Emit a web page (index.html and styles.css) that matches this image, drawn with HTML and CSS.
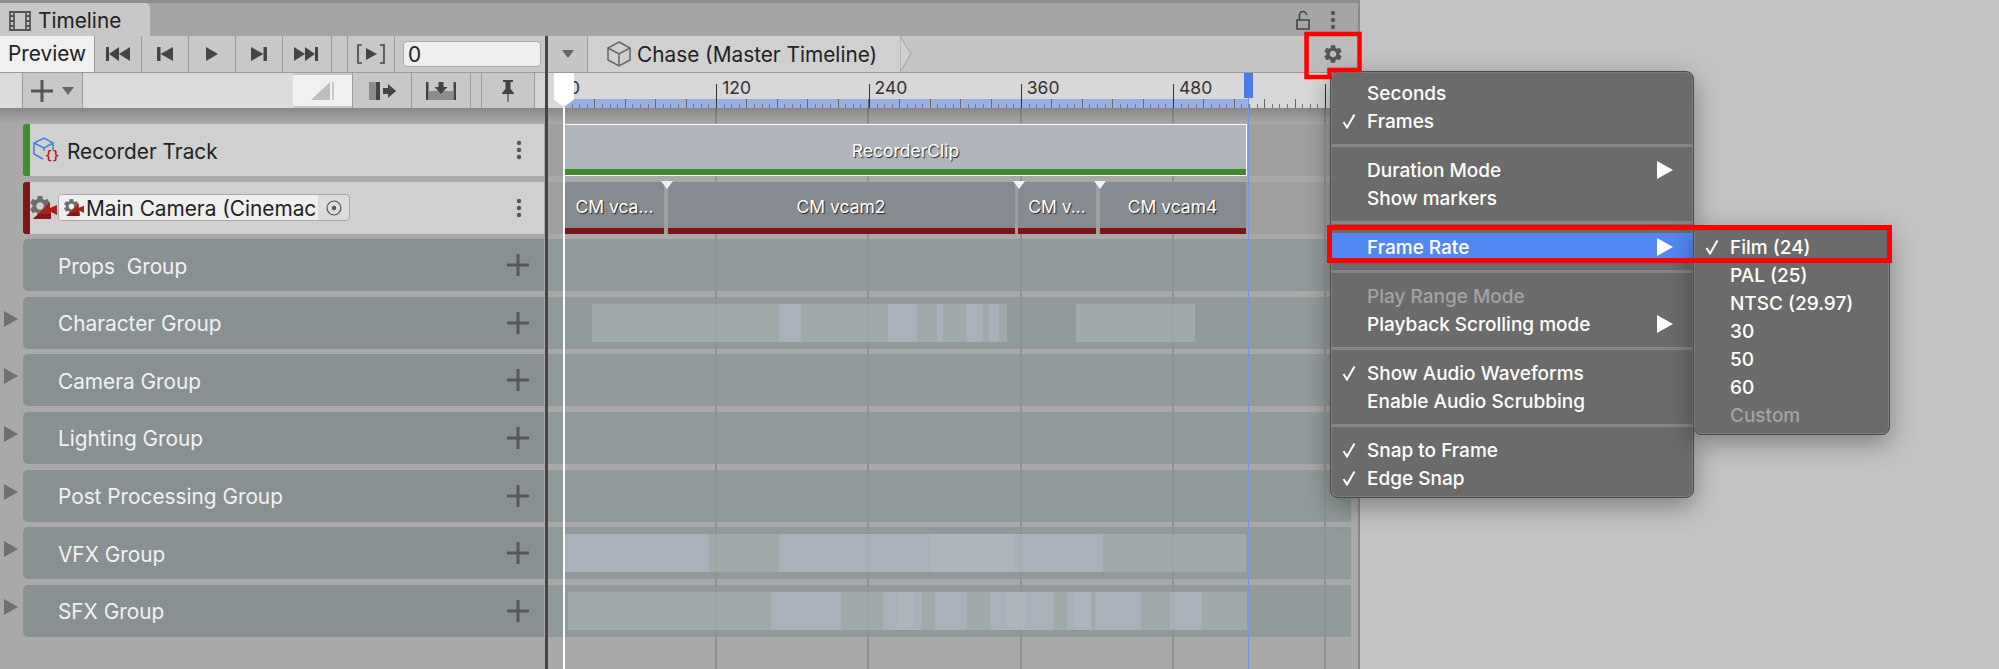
FILE: index.html
```html
<!DOCTYPE html>
<html lang="en">

<head>
    <meta charset="UTF-8">
    <title>Timeline</title>
    <link rel="stylesheet" href="styles.css">
</head>

<body>
    <svg class="defs" width="0" height="0">
        <symbol id="check" viewBox="0 0 14 16"><path d="M1.5 9 L5 14.5 L12.5 1.5" fill="none" stroke="#fff" stroke-width="2"/></symbol>
        <symbol id="arrow" viewBox="0 0 16 18"><path d="M0 0 L16 9 L0 18 Z" fill="#fff"/></symbol>
        <symbol id="plus" viewBox="0 0 22 22"><path d="M9.5 0 h3 v9.5 h9.5 v3 h-9.5 v9.5 h-3 v-9.5 h-9.5 v-3 h9.5 Z" fill="#565656"/></symbol>
        <symbol id="kebab" viewBox="0 0 6 20"><circle cx="3" cy="3" r="2.2"/><circle cx="3" cy="10" r="2.2"/><circle cx="3" cy="17" r="2.2"/></symbol>
        <symbol id="fold" viewBox="0 0 14 16"><path d="M0 0 L14 8 L0 16 Z" fill="#707070"/></symbol>
        <symbol id="gear" viewBox="0 0 24 24"><path d="M19.140 12.940c.04-.3.06-.61.06-.94 0-.32-.02-.64-.07-.94l2.030-1.580c.18-.14.23-.41.12-.61l-1.920-3.320c-.12-.22-.37-.29-.59-.22l-2.390.96c-.5-.38-1.030-.7-1.620-.94l-.36-2.540c-.04-.24-.24-.41-.48-.41h-3.840c-.24 0-.43.17-.47.41l-.36 2.540c-.59.24-1.130.57-1.620.94l-2.390-.96c-.22-.08-.47 0-.59.22L2.740 8.870c-.12.21-.08.47.12.61l2.030 1.580c-.05.3-.09.63-.09.94s.02.64.07.94l-2.030 1.580c-.18.14-.23.41-.12.61l1.920 3.320c.12.22.37.29.59.22l2.390-.96c.5.38 1.030.7 1.620.94l.36 2.540c.05.24.24.41.48.41h3.840c.24 0 .44-.17.47-.41l.36-2.540c.59-.24 1.130-.56 1.620-.94l2.390.96c.22.08.47 0 .59-.22l1.920-3.320c.12-.22.07-.47-.12-.61l-2.010-1.580zM12 15.600c-1.980 0-3.600-1.620-3.600-3.600s1.620-3.600 3.600-3.600 3.600 1.620 3.600 3.600-1.620 3.600-3.600 3.600z"/></symbol>
        <symbol id="camera" viewBox="0 0 27 23">
            <use href="#gear" x="-2.500" y="-2.500" width="25" height="25" fill="#6e6e6e"/>
            <path d="M3 23 L20 6 V12 L27 9 V19 L21 16 V23 Z" fill="#a8201a"/>
            <path d="M3 23 L9 18 H21 V23 Z" fill="#861612"/>
        </symbol>
    </svg>

    <div class="window">
        <div class="tabstrip">
            <div class="tab">
                <svg class="film" viewBox="0 0 22 20" width="22" height="20">
                    <path d="M1 1h20v18H1Z M1 5h4 M1 10h4 M1 15h4 M17 5h4 M17 10h4 M17 15h4 M5 1v18 M17 1v18" fill="none" stroke="#555" stroke-width="1.800"/>
                </svg>
                <span>Timeline</span>
            </div>
            <div class="tab-tools">
                <svg viewBox="0 0 14 20" width="14" height="20"><path d="M1 10h12v9H1Z M3.500 10V5a3.500 3.500 0 0 1 7 0" fill="none" stroke="#444" stroke-width="1.600"/></svg>
                <svg class="kebab" width="6" height="20"><use href="#kebab"/></svg>
            </div>
        </div>

        <div class="columns">
            <!-- Left side: controls and track headers -->
            <div class="left">
                <div class="toolbar">
                    <div class="preview">Preview</div>
                    <div class="tbtn"><svg viewBox="0 0 25 16" width="25" height="16"><path d="M0 1h3v14H0Z M3 8 L13 1v14Z M13 8 L24 1v14Z" fill="#444"/></svg></div>
                    <div class="tbtn"><svg viewBox="0 0 16 16" width="16" height="16"><path d="M0 1h3.500v14H0Z M3.500 8 L16 1v14Z" fill="#444"/></svg></div>
                    <div class="tbtn"><svg viewBox="0 0 12 16" width="12" height="16"><path d="M0 1 L12 8 L0 15Z" fill="#444"/></svg></div>
                    <div class="tbtn"><svg viewBox="0 0 16 16" width="16" height="16"><path d="M0 1 L12.500 8 L0 15Z M12.500 1H16v14h-3.500Z" fill="#444"/></svg></div>
                    <div class="tbtn"><svg viewBox="0 0 25 16" width="25" height="16"><path d="M0 1 L11 8 L0 15Z M11 1 L21 8 L11 15Z M21 1h3v14h-3Z" fill="#444"/></svg></div>
                    <div class="tbtn spacer"></div>
                    <div class="tbtn range"><svg viewBox="0 0 28 20" width="28" height="20"><path d="M5 1H1v18h4 M23 1h4v18h-4" fill="none" stroke="#444" stroke-width="1.600"/><path d="M9 4 L20 10 L9 16Z" fill="#444"/></svg></div>
                    <div class="framefield">0</div>
                </div>
                <div class="toolbar second">
                    <div class="cap"></div>
                    <div class="addbtn">
                        <svg width="22" height="22"><use href="#plus"/></svg>
                        <svg viewBox="0 0 12 8" width="12" height="8"><path d="M0 0h12L6 8Z" fill="#666"/></svg>
                    </div>
                    <div class="blank"></div>
                    <div class="blendbtn"><svg viewBox="0 0 24 18" width="24" height="18"><path d="M0 18 L19 0v18Z" fill="#bdbdbd"/><path d="M21 0h2v18h-2Z" fill="#c9c9c9"/></svg></div>
                    <div class="tbtn2"><svg viewBox="0 0 27 18" width="27" height="18"><path d="M0 0h7v18H0Z" fill="#8c8c8c"/><path d="M7 0h4v18H7Z" fill="#444"/><path d="M14 6h5V2l8 7-8 7v-4h-5Z" fill="#444"/></svg></div>
                    <div class="tbtn2"><svg viewBox="0 0 30 18" width="30" height="18"><path d="M0 0h2.500v18H0Z M27.500 0H30v18h-2.500Z" fill="#444"/><path d="M3 9h24v9H3Z" fill="#8c8c8c"/><path d="M12.500 0h5v5h4l-6.500 7-6.500-7h4Z" fill="#444"/></svg></div>
                    <div class="tbtn2 spacer2"></div>
                    <div class="tbtn2 pin"><svg viewBox="0 0 14 22" width="14" height="22"><path d="M2 0h10v2H9.500v7L13 13v1H1v-1l3.500-4V2H2Z" fill="#444"/><path d="M6 14h2v8H6Z" fill="#777"/></svg></div>
                    <div class="endcap"></div>
                </div>
                <div class="shade"></div>

                <div class="tracks">
                    <div class="track recorder">
                        <svg class="track-icon" viewBox="0 0 27 26" width="27" height="26">
                            <path d="M11 14 V11 M1 6 L11 11 L20 6 M20 13 V6 L11 1 L1 6 V17 L10 22" fill="none" stroke="#3f80dc" stroke-width="1.500"/>
                            <text class="braces" x="12" y="23">{}</text>
                        </svg>
                        <span class="track-name">Recorder Track</span>
                        <svg class="kebab" width="6" height="20"><use href="#kebab"/></svg>
                    </div>
                    <div class="track cam">
                        <svg class="cam-icon" width="27" height="23"><use href="#camera"/></svg>
                        <div class="objfield">
                            <div class="objname">
                                <svg width="20" height="17"><use href="#camera"/></svg>
                                <span>Main Camera (Cinemac</span>
                            </div>
                            <div class="objpick">
                                <svg viewBox="0 0 16 16" width="16" height="16"><circle cx="8" cy="8" r="7" fill="none" stroke="#555" stroke-width="1.200"/><circle cx="8" cy="8" r="2.200" fill="#555"/></svg>
                            </div>
                        </div>
                        <svg class="kebab" width="6" height="20"><use href="#kebab"/></svg>
                    </div>
                    <div class="group nofold"><span>Props&nbsp; Group</span><svg width="22" height="22"><use href="#plus"/></svg></div>
                    <div class="group"><svg class="fold" width="14" height="16"><use href="#fold"/></svg><span>Character Group</span><svg width="22" height="22"><use href="#plus"/></svg></div>
                    <div class="group"><svg class="fold" width="14" height="16"><use href="#fold"/></svg><span>Camera Group</span><svg width="22" height="22"><use href="#plus"/></svg></div>
                    <div class="group"><svg class="fold" width="14" height="16"><use href="#fold"/></svg><span>Lighting Group</span><svg width="22" height="22"><use href="#plus"/></svg></div>
                    <div class="group"><svg class="fold" width="14" height="16"><use href="#fold"/></svg><span>Post Processing Group</span><svg width="22" height="22"><use href="#plus"/></svg></div>
                    <div class="group"><svg class="fold" width="14" height="16"><use href="#fold"/></svg><span>VFX Group</span><svg width="22" height="22"><use href="#plus"/></svg></div>
                    <div class="group"><svg class="fold" width="14" height="16"><use href="#fold"/></svg><span>SFX Group</span><svg width="22" height="22"><use href="#plus"/></svg></div>
                </div>
            </div>

            <!-- Right side: breadcrumb, ruler and clips -->
            <div class="right">
                <div class="crumbbar">
                    <div class="crumb-drop"><svg viewBox="0 0 12 8" width="12" height="8"><path d="M0 0h12L6 8Z" fill="#666"/></svg></div>
                    <div class="crumb">
                        <svg viewBox="0 0 24 26" width="24" height="26"><path d="M12 1 L23 7 V19 L12 25 L1 19 V7 Z M1 7 L12 13 L23 7 M12 13 V25" fill="none" stroke="#666" stroke-width="1.500"/></svg>
                        <span>Chase (Master Timeline)</span>
                    </div>
                    <svg class="crumb-tip" viewBox="0 0 12 36" width="12" height="36" preserveAspectRatio="none"><path d="M0 0 L11 18 L0 36 Z" fill="#d0d0d0" stroke="#a0a0a0" stroke-width="1"/></svg>
                    <div class="crumb-rest"></div>
                    <div class="gearbtn">
                        <svg width="22" height="22" fill="#555"><use href="#gear"/></svg>
                    </div>
                </div>

                <div class="ruler">
                    <div class="major"><span>0</span></div>
                    <div class="major"><span>120</span></div>
                    <div class="major"><span>240</span></div>
                    <div class="major"><span>360</span></div>
                    <div class="major"><span>480</span></div>
                    <div class="major"></div>
                </div>

                <div class="lanes">
                    <div class="lane plain"><div class="clip-rec">RecorderClip</div></div>
                    <div class="lane plain cams">
                        <div class="clip-cm c1">CM vca...</div>
                        <div class="clip-cm c2">CM vcam2</div>
                        <div class="clip-cm c3">CM v...</div>
                        <div class="clip-cm c4">CM vcam4</div>
                    </div>
                    <div class="lane"></div>
                    <div class="lane wave">
                        <i style="margin-left:44px;width:187px"></i><i class="hi" style="width:22px"></i><i style="width:87px"></i><i class="hi" style="width:29px"></i><i style="width:20px"></i><i class="hi" style="width:6px"></i><i style="width:23px"></i><i class="hi" style="width:17px"></i><i style="width:6px"></i><i class="hi" style="width:10px"></i><i style="width:8px"></i><b style="width:69px"></b><i style="width:119px"></i>
                    </div>
                    <div class="lane"></div>
                    <div class="lane"></div>
                    <div class="lane"></div>
                    <div class="lane wave">
                        <i class="hi" style="margin-left:17px;width:144px"></i><i style="width:70px"></i><i class="hi" style="width:151px"></i><i class="top" style="width:83px"></i><i class="hi" style="width:90px"></i><i style="width:143px"></i>
                    </div>
                    <div class="lane wave">
                        <i style="margin-left:20px;width:203px"></i><i class="hi" style="width:70px"></i><i style="width:42px"></i><i class="hi" style="width:14px"></i><i class="top" style="width:16px"></i><i class="hi" style="width:9px"></i><i style="width:13px"></i><i class="hi" style="width:32px"></i><i style="width:23px"></i><i class="hi" style="width:17px"></i><i class="top" style="width:18px"></i><i class="hi" style="width:29px"></i><i style="width:13px"></i><i class="hi" style="width:8px"></i><i class="top" style="width:15px"></i><i class="hi" style="width:2px"></i><i style="width:3px"></i><i class="hi" style="width:46px"></i><i style="width:29px"></i><i class="hi" style="width:32px"></i><i style="width:45px"></i>
                    </div>
                </div>

                <!-- Playhead and end marker lie over the clips -->
                <div class="playhead"></div>
                <div class="endline"></div>
                <div class="mark m1"></div>
                <div class="mark m2"></div>
                <div class="mark m3"></div>
            </div>
        </div>
    </div>

    <!-- Context menu -->
    <div class="menu main-menu">
        <div class="item"><span>Seconds</span></div>
        <div class="item"><svg class="tick" width="14" height="16"><use href="#check"/></svg><span>Frames</span></div>
        <div class="sep"></div>
        <div class="item"><span>Duration Mode</span><svg class="more" width="16" height="18"><use href="#arrow"/></svg></div>
        <div class="item"><span>Show markers</span></div>
        <div class="sep"></div>
        <div class="item active"><span>Frame Rate</span><svg class="more" width="16" height="18"><use href="#arrow"/></svg></div>
        <div class="sep"></div>
        <div class="item off"><span>Play Range Mode</span></div>
        <div class="item"><span>Playback Scrolling mode</span><svg class="more" width="16" height="18"><use href="#arrow"/></svg></div>
        <div class="sep"></div>
        <div class="item"><svg class="tick" width="14" height="16"><use href="#check"/></svg><span>Show Audio Waveforms</span></div>
        <div class="item"><span>Enable Audio Scrubbing</span></div>
        <div class="sep"></div>
        <div class="item"><svg class="tick" width="14" height="16"><use href="#check"/></svg><span>Snap to Frame</span></div>
        <div class="item"><svg class="tick" width="14" height="16"><use href="#check"/></svg><span>Edge Snap</span></div>
    </div>

    <div class="menu sub-menu">
        <div class="item"><svg class="tick" width="14" height="16"><use href="#check"/></svg><span>Film (24)</span></div>
        <div class="item"><span>PAL (25)</span></div>
        <div class="item"><span>NTSC (29.97)</span></div>
        <div class="item"><span>30</span></div>
        <div class="item"><span>50</span></div>
        <div class="item"><span>60</span></div>
        <div class="item off"><span>Custom</span></div>
    </div>

    <!-- Red annotations -->
    <svg class="note-gear" viewBox="1300 30 66 54" width="66" height="54"><path d="M1306.500 34 H1359.500 V70 H1329.500 V77 H1306.500 Z" fill="none" stroke="#f00" stroke-width="4.500"/></svg>
    <div class="note-rate"></div>
</body>

</html>
```

FILE: styles.css
```css
/* Base styling */
html, body {
    margin: 0;
    padding: 0;
}

body {
    width: 1999px;
    height: 669px;
    overflow: hidden;
    position: relative;
    background: #c3c3c3;
    font-family: Inter, "Noto Sans", sans-serif;
    color: #222;
}

.defs {
    position: absolute;
}

svg {
    display: block;
    flex: none;
}

/* Window */
.window {
    width: 1358px;
    height: 669px;
    border-right: 2px solid #8a8a8a;
    background: #a9a9a9;
    display: flex;
    flex-direction: column;
}

.tabstrip {
    height: 33px;
    padding-top: 3px;
    background: linear-gradient(#8d8d8d 0, #8d8d8d 3px, #a5a5a5 3px);
    display: flex;
    justify-content: space-between;
    flex: none;
}

.tab {
    width: 150px;
    background: #c8c8c8;
    border-radius: 0 5px 0 0;
    display: flex;
    align-items: center;
    gap: 7px;
    padding: 2px 0 0 9px;
    box-sizing: border-box;
    font-size: 20.8px;
}

.tab-tools {
    display: flex;
    align-items: center;
    gap: 20px;
    padding-right: 22px;
}

.kebab {
    fill: #555;
}

.columns {
    flex: 1;
    display: flex;
    position: relative;
}

/* Left column */
.left {
    width: 545px;
    flex: none;
    display: flex;
    flex-direction: column;
}

.toolbar {
    height: 36px;
    border-bottom: 1px solid #999;
    display: flex;
    background: #c8c8c8;
    flex: none;
}

.preview {
    width: 94px;
    background: #f0f0f0;
    font-size: 20.8px;
    line-height: 36px;
    text-align: center;
}

.tbtn {
    width: 46px;
    border-left: 1px solid #9c9c9c;
    display: flex;
    align-items: center;
    justify-content: center;
    flex: none;
}

.tbtn.spacer {
    width: 15px;
    margin-left: 2px;
}

.tbtn.range {
    border-right: 1px solid #9c9c9c;
}

.framefield {
    width: 132px;
    height: 24px;
    margin: 5px 0 0 8px;
    background: #efefef;
    border: 1px solid #aaa;
    border-radius: 4px;
    font-size: 20.8px;
    line-height: 25px;
    padding-left: 4px;
}

.toolbar.second {
    height: 35px;
    border-bottom: 0;
    background: #c8c8c8;
}

.cap {
    width: 22px;
    background: #dcdcdc;
}

.addbtn {
    border-left: 1px solid #9c9c9c;
    border-right: 1px solid #9c9c9c;
    display: flex;
    align-items: center;
    gap: 9px;
    padding-left: 8px;
    box-sizing: border-box;
    width: 61px;
}

.blank {
    width: 210px;
    background: #dcdcdc;
}

.blendbtn {
    width: 59px;
    height: 31px;
    margin-top: 2px;
    background: #f0f0f0;
    display: flex;
    align-items: center;
    justify-content: center;
}

.tbtn2 {
    width: 58px;
    border-left: 1px solid #9c9c9c;
    display: flex;
    align-items: center;
    justify-content: center;
}

.tbtn2.spacer2 {
    width: 10px;
}

.tbtn2.pin {
    width: 52px;
    border-right: 1px solid #9c9c9c;
}

.endcap {
    flex: 1;
    background: #d4d4d4;
}

.shade {
    height: 16px;
    background: linear-gradient(#888, #a9a9a9);
    flex: none;
}

/* Track headers */
.tracks {
    display: flex;
    flex-direction: column;
    gap: 5.6px;
    padding-left: 23px;
}

.track {
    height: 52px;
    width: 521px;
    background: #d0d0d0;
    border-left: 7px solid #3f8f2f;
    border-radius: 3px 0 0 3px;
    box-sizing: border-box;
    display: flex;
    align-items: center;
    padding-right: 22px;
}

.track.cam {
    border-left-color: #7d1518;
}

.track-icon {
    margin-left: 3px;
}

.track-name {
    margin-left: 7px;
    padding-top: 2px;
    font-size: 20.8px;
    flex: 1;
}

.braces {
    font-family: "DejaVu Sans Mono", monospace;
    font-weight: 700;
    font-size: 12px;
    fill: #b5201c;
}

.objfield {
    width: 292px;
    height: 27px;
    margin: 0 auto 0 1px;
    box-sizing: border-box;
    border: 1px solid #a8a8a8;
    border-radius: 4px;
    background: #dcdcdc;
    display: flex;
}

.objname {
    width: 259px;
    background: #efefef;
    border-radius: 3px 0 0 3px;
    display: flex;
    align-items: center;
    gap: 2px;
    padding-left: 5px;
    box-sizing: border-box;
    white-space: nowrap;
    font-size: 20.8px;
}

.objname span {
    padding-top: 2px;
}

.objpick {
    flex: 1;
    display: flex;
    align-items: center;
    justify-content: center;
}

.group {
    height: 52px;
    width: 521px;
    background: #889092;
    border-radius: 5px 0 0 5px;
    display: flex;
    align-items: center;
    justify-content: space-between;
    box-sizing: border-box;
    padding: 0 15px 0 35px;
    position: relative;
    font-size: 20.8px;
    color: #f2f2f2;
}

.group span {
    padding-top: 2px;
}

.fold {
    position: absolute;
    left: -19px;
    top: 14px;
}

/* Right column */
.right {
    flex: 1;
    border-left: 3px solid #454545;
    display: flex;
    flex-direction: column;
    position: relative;
    min-width: 0;
}

.crumbbar {
    height: 36px;
    border-bottom: 1px solid #999;
    background: #c5c5c5;
    display: flex;
    flex: none;
}

.crumb-drop {
    width: 39px;
    display: flex;
    align-items: center;
    justify-content: center;
    border-right: 1px solid #9c9c9c;
    flex: none;
}

.crumb {
    width: 312px;
    background: #d0d0d0;
    display: flex;
    align-items: center;
    gap: 6px;
    padding-left: 19px;
    box-sizing: border-box;
    font-size: 20.8px;
    flex: none;
    white-space: nowrap;
}

.crumb-rest {
    flex: 1;
}

.gearbtn {
    width: 48px;
    border-left: 1px solid #9c9c9c;
    background: #bcbcbc;
    display: flex;
    align-items: center;
    justify-content: center;
    margin-right: 1px;
}

/* Ruler */
.ruler {
    height: 35px;
    flex: none;
    display: flex;
    padding-left: 16px;
    background-color: #d8d8d8;
    background-image: linear-gradient(#98afe0, #98afe0);
    background-size: 684px 9px;
    background-position: 16px 26px;
    background-repeat: no-repeat;
}

.major {
    width: 152.25px;
    flex: none;
    height: 35px;
    background-image:
        linear-gradient(#333, #333),
        repeating-linear-gradient(90deg, #666 0, #666 1px, transparent 1px, transparent 30.45px),
        repeating-linear-gradient(90deg, #777 0, #777 1px, transparent 1px, transparent 7.6px);
    background-size: 1px 24px, 100% 9px, 100% 4px;
    background-position: 0 100%, 0 100%, 0 100%;
    background-repeat: no-repeat;
    font-size: 17.5px;
    color: #333;
}

.major:first-child span {
    padding-left: 5px;
}

.major:nth-child(6) {
    width: 30px;
}

.major span {
    display: block;
    padding: 5px 0 0 6px;
    height: 20px;
    line-height: 20px;
}

/* Clips area */
.lanes {
    flex: 1;
    padding: 16px 7px 0 0;
    display: flex;
    flex-direction: column;
    gap: 5.6px;
    background-color: #a9a9a9;
    background-image:
        linear-gradient(rgba(0, 0, 0, 0.2), rgba(0, 0, 0, 0)),
        repeating-linear-gradient(90deg, transparent 0, transparent 151.25px, rgba(0, 0, 0, 0.28) 151.25px, rgba(0, 0, 0, 0.28) 152.25px);
    background-size: 100% 16px, 100% 100%;
    background-position: 0 0, 16.5px 0;
    background-repeat: no-repeat, repeat;
}

.lane {
    height: 52px;
    background: rgba(137, 149, 150, 0.75);
    display: flex;
    flex: none;
}

.lane.plain {
    background: rgba(150, 150, 150, 0.5);
}

.clip-rec {
    width: 683px;
    height: 52px;
    margin-left: 16px;
    box-sizing: border-box;
    background: linear-gradient(#b0b4bc 0, #b0b4bc 44px, #3f8a2c 44px, #3f8a2c 50px, #fff 50px);
    border: 1px solid #fff;
    border-width: 1px 1px 0;
    text-align: center;
    line-height: 52px;
}

.clip-rec, .clip-cm {
    font-size: 17.5px;
    color: #fff;
    text-shadow: 1px 1px 1px #222;
    white-space: nowrap;
}

.clip-cm {
    height: 52px;
    box-sizing: border-box;
    background: linear-gradient(#868a91 0, #868a91 46px, #7a1416 46px);
    text-align: center;
    line-height: 50px;
    flex: none;
}

.cams {
    padding-left: 17px;
    gap: 3.5px;
}

.c1 { width: 99px; }
.c2 { width: 347px; }
.c3 { width: 78px; }
.c4 { width: 146px; }

/* Waveform previews */
.wave {
    padding: 7px 0;
    box-sizing: border-box;
}

.wave i {
    display: block;
    flex: none;
    background: rgba(193, 200, 203, 0.35);
}

.wave i.hi {
    background: rgba(195, 200, 217, 0.5);
}

.wave i.top {
    background: rgba(195, 200, 213, 0.6);
}

.wave b {
    display: block;
    flex: none;
}

/* Playhead and markers */
.playhead {
    position: absolute;
    left: 15px;
    top: 71px;
    bottom: 0;
    width: 2px;
    background: #fff;
}

.playhead::before {
    content: '';
    position: absolute;
    left: -9px;
    top: -34px;
    width: 20px;
    height: 34px;
    background: #fff;
    clip-path: polygon(0 0, 100% 0, 100% 78%, 50% 100%, 0 78%);
}

.endline {
    position: absolute;
    left: 700px;
    top: 62px;
    bottom: 0;
    width: 1px;
    background: #7092e8;
}

.endline::before {
    content: '';
    position: absolute;
    left: -4px;
    top: -25px;
    width: 9px;
    height: 25px;
    background: #4e78e4;
}

.mark {
    position: absolute;
    top: 145px;
    width: 12px;
    height: 8px;
    background: #f2f2f2;
    clip-path: polygon(0 0, 100% 0, 50% 100%);
}

.m1 { left: 113px; }
.m2 { left: 465px; }
.m3 { left: 546px; }

/* Menus */
.menu {
    position: absolute;
    box-sizing: border-box;
    background: #6b6b6b;
    border: 1px solid #4b4b4b;
    box-shadow: inset 0 0 0 1px #7d7d7d, 0 8px 26px rgba(0, 0, 0, 0.35);
    border-radius: 8px;
    color: #fff;
    font-size: 19px;
    font-weight: 500;
}

.main-menu {
    left: 1330px;
    top: 71px;
    width: 364px;
    height: 427px;
    padding-top: 7px;
}

.sub-menu {
    left: 1693px;
    top: 225px;
    width: 197px;
    height: 210px;
    padding-top: 7px;
}

.item {
    height: 28px;
    display: flex;
    align-items: center;
    position: relative;
    padding-left: 36px;
    white-space: nowrap;
}

.item.active {
    background: #5388f2;
}

.item.off {
    color: #a3a3a3;
}

.sep {
    height: 21px;
    display: flex;
    align-items: center;
}

.sep::before {
    content: '';
    display: block;
    width: 100%;
    height: 3px;
    background: #858585;
}

.tick {
    position: absolute;
    left: 11px;
    top: 6px;
}

.more {
    position: absolute;
    right: 20px;
    top: 5px;
}

/* Red annotations */
.note-gear {
    position: absolute;
    left: 1300px;
    top: 30px;
}

.note-rate {
    position: absolute;
    left: 1327px;
    top: 225px;
    width: 565px;
    height: 38px;
    box-sizing: border-box;
    border: 5px solid #f00;
}
```
